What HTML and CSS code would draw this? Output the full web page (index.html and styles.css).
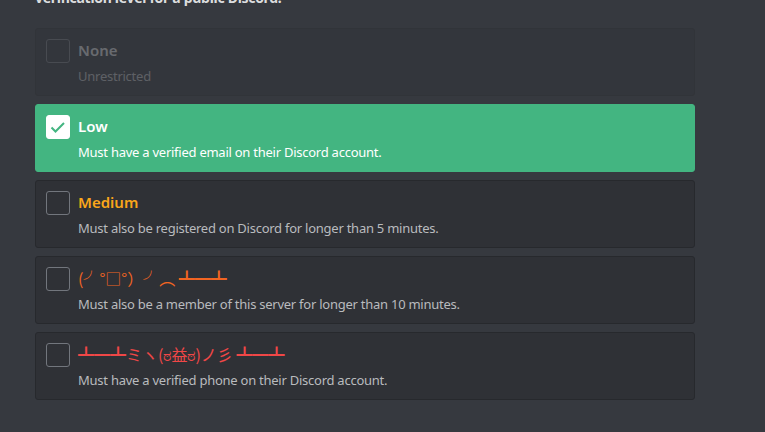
FILE: index.html
```html
<!DOCTYPE html>
<html lang="en">
<head>
<meta charset="utf-8">
<title>Verification Level</title>
<link rel="stylesheet" href="styles.css">
</head>
<body>
<div class="page">
  <div class="intro">verification level for a public Discord.</div>
  <div class="options">
    <div class="card disabled">
      <div class="box"></div>
      <div class="text">
        <div class="title">None</div>
        <div class="desc">Unrestricted</div>
      </div>
    </div>
    <div class="card selected">
      <div class="box checked">
        <svg width="24" height="24" viewBox="0 0 24 24"><path d="M5.5 12.5 L9.5 16.5 L18 8" fill="none" stroke="#43b581" stroke-width="2"/></svg>
      </div>
      <div class="text">
        <div class="title">Low</div>
        <div class="desc">Must have a verified email on their Discord account.</div>
      </div>
    </div>
    <div class="card">
      <div class="box"></div>
      <div class="text">
        <div class="title medium">Medium</div>
        <div class="desc">Must also be registered on Discord for longer than 5 minutes.</div>
      </div>
    </div>
    <div class="card">
      <div class="box"></div>
      <div class="text">
        <div class="title high">(╯°□°）╯︵ ┻━┻</div>
        <div class="desc">Must also be a member of this server for longer than 10 minutes.</div>
      </div>
    </div>
    <div class="card">
      <div class="box"></div>
      <div class="text">
        <div class="title veryhigh">┻━┻ミヽ(ಠ益ಠ)ノ彡 ┻━┻</div>
        <div class="desc">Must have a verified phone on their Discord account.</div>
      </div>
    </div>
  </div>
</div>
</body>
</html>
```

FILE: styles.css
```css
html, body {
  margin: 0;
  padding: 0;
  background: #36393f;
  height: 100%;
  overflow: hidden;
}
body {
  font-family: "Noto Sans", "Noto Sans CJK JP", sans-serif;
  color: #b9bbbe;
}
.page {
  margin-top: -12px;
  padding-left: 35px;
  width: 660px;
}
.intro {
  font-size: 14px;
  font-weight: 700;
  line-height: 20px;
  color: #dcddde;
  margin-bottom: 20px;
  letter-spacing: -0.3px;
}
.options {
  display: flex;
  flex-direction: column;
  gap: 8px;
}
.card {
  display: flex;
  gap: 8px;
  padding: 10px;
  background: #2f3136;
  border: 1px solid #27292d;
  border-radius: 3px;
}
.card.disabled {
  opacity: 0.3;
}
.card.selected {
  background: #43b581;
  border-color: #43b581;
}
.box {
  width: 24px;
  height: 24px;
  box-sizing: border-box;
  border: 1px solid #72767d;
  border-radius: 3px;
  flex: none;
}
.box.checked {
  background: #ffffff;
  border-color: #ffffff;
  position: relative;
}
.box.checked svg {
  position: absolute;
  left: -1px;
  top: -1px;
}
.title {
  font-size: 15px;
  font-weight: 600;
  line-height: 22px;
  color: #dcddde;
}
.desc {
  font-size: 13px;
  line-height: 17px;
  margin-top: 7px;
  letter-spacing: -0.25px;
}
.selected .title, .selected .desc {
  color: #ffffff;
}
.title.medium { color: #faa61a; }
.title.high, .title.veryhigh {
  font-family: "Noto Sans CJK JP", "Noto Sans", sans-serif;
  font-weight: 400;
  font-size: 16px;
}
.title.high { color: #f26522; }
.title.veryhigh { color: #f04747; }
```
